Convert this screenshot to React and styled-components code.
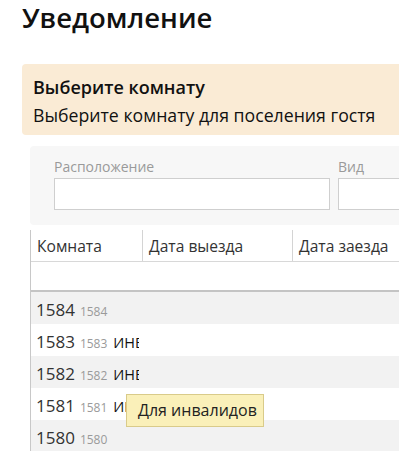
import React from "react";
import styled, { createGlobalStyle } from "styled-components";

const Global = createGlobalStyle`
  html, body {
    margin: 0;
    padding: 0;
    overflow: hidden;
    background: #ffffff;
  }
  body {
    font-family: "Open Sans", "Noto Sans", sans-serif;
    color: #222;
  }
`;

const Page = styled.div`
  width: 760px;
  padding-left: 22px;
`;

const Title = styled.h1`
  margin: 0;
  font-size: 27.5px;
  font-weight: 600;
  line-height: 35px;
  color: #111;
`;

const Alert = styled.div`
  margin-top: 29px;
  background: #faebd5;
  border-radius: 4px;
  padding: 10px 10px 7px 11px;
`;

const AlertTitle = styled.div`
  font-size: 18px;
  font-weight: 650;
  line-height: 26px;
  color: #111;
`;

const AlertText = styled.div`
  margin-top: 2px;
  font-size: 17.7px;
  line-height: 26px;
  color: #111;
`;

const Content = styled.div`
  margin-left: 8px;
`;

const Filters = styled.div`
  margin-top: 11px;
  background: #f7f7f7;
  border-radius: 4px;
  padding: 12px 24px 15px;
  display: grid;
  grid-template-columns: 276px 276px 1fr;
  column-gap: 8px;
`;

const Field = styled.label`
  display: flex;
  flex-direction: column;
  gap: 3px;
`;

const FieldLabel = styled.span`
  font-size: 14px;
  line-height: 17px;
  color: #9a9a9a;
`;

const Input = styled.input`
  box-sizing: border-box;
  height: 32px;
  width: 100%;
  border: 1px solid #cfcfcf;
  background: #fff;
  margin: 0;
  padding: 0 6px;
  font: inherit;
`;

const Grid = styled.div`
  position: relative;
  margin-top: 5px;
  width: 700px;
  border-left: 1px solid #c8c8c8;
`;

const GridRow = styled.div`
  display: grid;
  grid-template-columns: 111px 150px 150px 1fr;
  background: ${(p) => p.$bg || "#ffffff"};
`;

const HeadRow = styled(GridRow)`
  height: 31px;
  border-bottom: 1px solid #d8d8d8;
`;

const Th = styled.div`
  padding: 4px 6px 0 6px;
  line-height: 25px;
  font-size: 15.6px;
  color: #333;
  white-space: nowrap;
  overflow: hidden;
  & + & {
    border-left: 1px solid #d4d4d4;
  }
`;

const FilterRow = styled.div`
  height: 28px;
  border-bottom: 2px solid #c4c4c4;
  background: #fff;
`;

const DataRow = styled(GridRow)`
  height: 32px;
`;

const Cell = styled.div`
  padding: 3px 3px 0 5px;
  min-width: 0;
`;

const CellText = styled.div`
  line-height: 29px;
  white-space: nowrap;
  overflow: hidden;
  font-size: 17px;
  color: #333;
`;

const Sub = styled.span`
  font-size: 12px;
  line-height: 1;
  color: #9a9a9a;
  margin-left: 5px;
`;

const Tag = styled.span`
  font-size: 14.5px;
  line-height: 1;
  color: #111;
  margin-left: 6px;
`;

const Tooltip = styled.div`
  position: absolute;
  left: 95px;
  top: 164px;
  box-sizing: border-box;
  width: 138px;
  height: 33px;
  padding: 0 11px;
  background: #faf0b9;
  border: 1px solid #d9cb8a;
  font-size: 16px;
  line-height: 31px;
  color: #222;
  white-space: nowrap;
`;

const rooms = [
  { n: 1584, tag: "" },
  { n: 1583, tag: "ИНВАЛИД" },
  { n: 1582, tag: "ИНВАЛИД" },
  { n: 1581, tag: "ИНВАЛИД" },
  { n: 1580, tag: "" },
];

export default function App() {
  return (
    <>
      <Global />
      <Page>
        <Title>Уведомление</Title>
        <Alert>
          <AlertTitle>Выберите комнату</AlertTitle>
          <AlertText>Выберите комнату для поселения гостя</AlertText>
        </Alert>
        <Content>
          <Filters>
            <Field>
              <FieldLabel>Расположение</FieldLabel>
              <Input />
            </Field>
            <Field>
              <FieldLabel>Вид</FieldLabel>
              <Input />
            </Field>
          </Filters>
          <Grid>
            <HeadRow>
              <Th>Комната</Th>
              <Th>Дата выезда</Th>
              <Th>Дата заезда</Th>
              <Th>Статус</Th>
            </HeadRow>
            <FilterRow />
            {rooms.map((r, i) => (
              <DataRow key={r.n} $bg={i % 2 === 0 ? "#f2f2f2" : "#ffffff"}>
                <Cell>
                  <CellText>
                    {r.n}
                    <Sub>{r.n}</Sub>
                    {r.tag && <Tag>{r.tag}</Tag>}
                  </CellText>
                </Cell>
                <Cell />
                <Cell />
                <Cell />
              </DataRow>
            ))}
            <Tooltip>Для инвалидов</Tooltip>
          </Grid>
        </Content>
      </Page>
    </>
  );
}
